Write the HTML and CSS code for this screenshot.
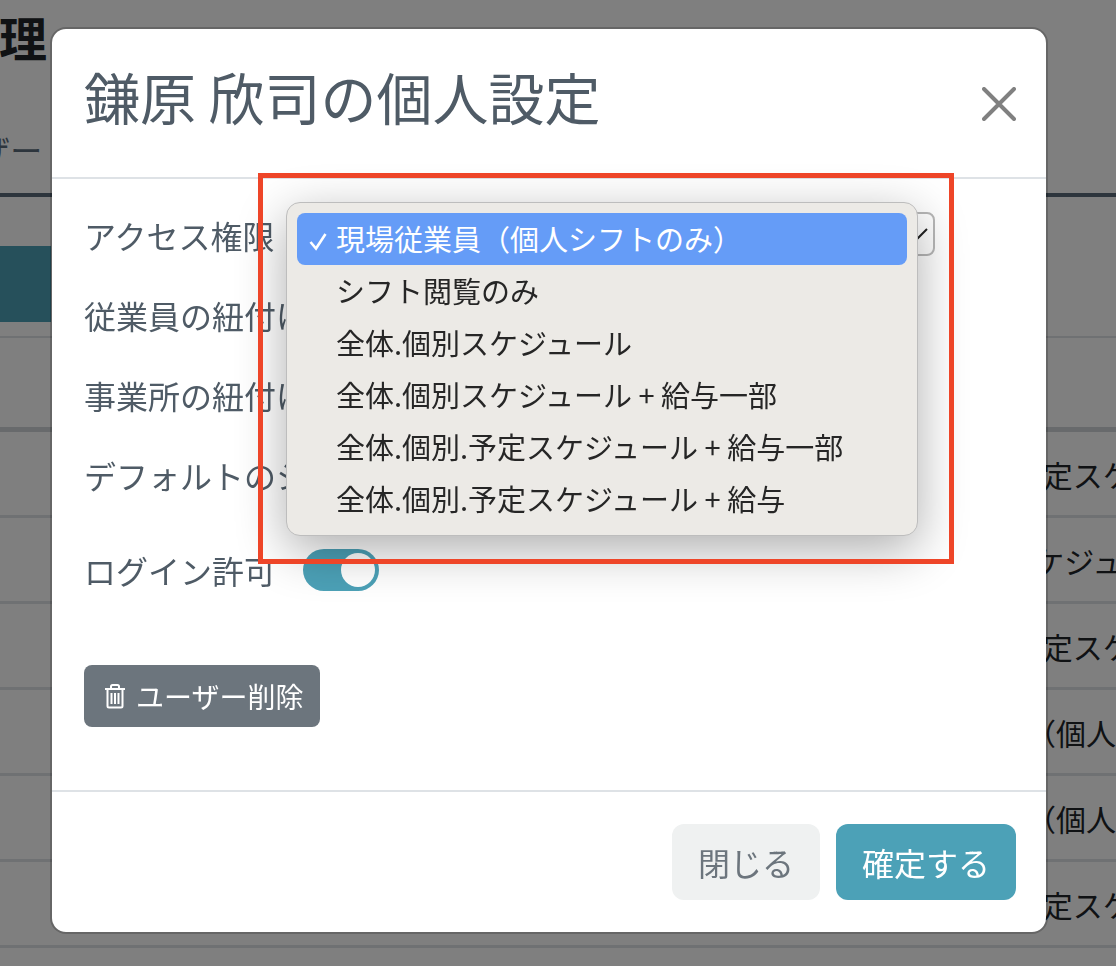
FILE: index.html
```html
<!DOCTYPE html>
<html lang="ja">
<head>
<meta charset="utf-8">
<title>ユーザー管理</title>
<link rel="stylesheet" href="styles.css">
</head>
<body>
<main class="page">
  <h1 class="page-title">ユーザー管理</h1>
  <div class="tabs"><span class="tab">ユーザー</span></div>
  <div class="actions"><span class="add-btn">ユーザーを追加</span></div>
  <div class="table">
    <div class="row row-head"></div>
    <div class="row row-th"></div>
    <div class="row"><span class="cell">全体.個別.予定スケジュール</span></div>
    <div class="row"><span class="cell">全体.個別スケジュール</span></div>
    <div class="row"><span class="cell">全体.個別.予定スケジュール</span></div>
    <div class="row"><span class="cell">現場従業員（個人シフトのみ）</span></div>
    <div class="row"><span class="cell">現場従業員（個人シフトのみ）</span></div>
    <div class="row"><span class="cell">全体.個別.予定スケジュール</span></div>
  </div>
</main>

<div class="backdrop">
  <section class="modal">
    <header class="modal-header">
      <h2 class="modal-title">鎌原 欣司の個人設定</h2>
      <svg class="close-icon" viewBox="0 0 34 34" width="34" height="34" aria-label="閉じる"><path d="M2 2L32 32M32 2L2 32" fill="none" stroke="#808080" stroke-width="4" stroke-linecap="round"/></svg>
    </header>
    <div class="modal-body">
      <div class="form-row">
        <label class="form-label">アクセス権限</label>
        <div class="select">
          <svg class="select-chevron" viewBox="0 0 24 14" width="24" height="14"><path d="M2 2L12 11L21 2" fill="none" stroke="#222" stroke-width="2"/></svg>
        </div>
      </div>
      <div class="form-row"><label class="form-label">従業員の紐付け</label></div>
      <div class="form-row"><label class="form-label">事業所の紐付け</label></div>
      <div class="form-row"><label class="form-label">デフォルトのシフト</label></div>
      <div class="form-row form-row-toggle">
        <label class="form-label">ログイン許可</label>
        <span class="toggle"><span class="toggle-knob"></span></span>
      </div>
      <button class="delete-btn" type="button">
        <svg class="trash-icon" viewBox="0 0 22 26" width="22" height="26"><path d="M1 6H21M7 6V3.5A1.5 1.5 0 0 1 8.500 2H13.500A1.500 1.500 0 0 1 15 3.500V6M3.500 6V23A1.500 1.500 0 0 0 5 24.500H17A1.500 1.500 0 0 0 18.500 23V6M7.500 10V21M11 10V21M14.500 10V21" fill="none" stroke="#fff" stroke-width="2"/></svg>
        ユーザー削除
      </button>
    </div>
    <footer class="modal-footer">
      <button class="btn btn-light" type="button">閉じる</button>
      <button class="btn btn-primary" type="button">確定する</button>
    </footer>

    <ul class="menu">
      <li class="menu-item is-selected"><svg class="check" viewBox="0 0 20 20" width="20" height="20"><path d="M2.500 11L8 17.500L17.500 3" fill="none" stroke="#fff" stroke-width="2.600"/></svg>現場従業員（個人シフトのみ）</li>
      <li class="menu-item">シフト閲覧のみ</li>
      <li class="menu-item">全体.個別スケジュール</li>
      <li class="menu-item">全体.個別スケジュール + 給与一部</li>
      <li class="menu-item">全体.個別.予定スケジュール + 給与一部</li>
      <li class="menu-item">全体.個別.予定スケジュール + 給与</li>
    </ul>
    <div class="highlight"></div>
  </section>
</div>
</body>
</html>
```

FILE: styles.css
```css
* { box-sizing: border-box; }
html, body { margin: 0; height: 966px; overflow: hidden; }
body {
  font-family: "Noto Sans CJK JP", "Noto Sans", sans-serif;
  background: #fff;
  color: #212529;
}
.page { height: 966px; overflow: hidden; }
.page-title {
  margin: 0 0 0 -240px;
  height: 80px;
  padding-top: 6px;
  font-size: 48px;
  line-height: 60px;
  font-weight: 700;
  white-space: nowrap;
}
.tabs { height: 117px; border-bottom: 4px solid #5a6b7a; display: flex; align-items: flex-end; }
.tab { margin-left: -85px; padding-bottom: 22px; font-size: 32px; line-height: 44px; color: #5a6b7a; white-space: nowrap; }
.actions { margin-top: 49px; height: 76px; }
.add-btn {
  display: block;
  width: 300px;
  margin-left: -249px;
  height: 76px;
  padding: 16px 20px;
  background: #4ca1b7;
  color: #fff;
  font-size: 32px;
  line-height: 44px;
  white-space: nowrap;
}
.table { margin-top: 14px; }
.row { height: 86px; border-bottom: 3px solid #dee2e6; display: flex; align-items: center; }
.row-head { height: 0; border-bottom: 2px solid #dee2e6; }
.row-th { height: 94px; border-bottom: 5px solid #d0d4d8; }
.cell { margin-left: 876px; font-size: 30px; line-height: 40px; white-space: nowrap; }

.backdrop {
  position: fixed;
  inset: 0;
  padding: 27px 68px 32px 50px;
  background: rgba(0, 0, 0, 0.5);
  display: flex;
}
.modal {
  position: relative;
  flex: 1;
  display: flex;
  flex-direction: column;
  background: #fff;
  border: 2px solid rgba(0, 0, 0, 0.2);
  background-clip: padding-box;
  border-radius: 16px;
}
.modal-header {
  height: 150px;
  flex: none;
  padding: 30px 30px 0 32px;
  display: flex;
  justify-content: space-between;
  border-bottom: 2px solid #dee2e6;
}
.modal-title {
  margin: 0;
  font-size: 56px;
  line-height: 74px;
  font-weight: 400;
  color: #4f5b66;
  white-space: nowrap;
}
.close-icon { margin-top: 28px; }
.modal-body {
  flex: 1;
  padding: 16px 32px 0;
  border-bottom: 2px solid #dee2e6;
}
.form-row { height: 80px; display: flex; align-items: center; }
.form-row-toggle { margin-top: 15px; }
.form-label { width: 215px; flex: none; font-size: 32px; line-height: 44px; color: #4f5b66; white-space: nowrap; }
.select {
  width: 636px;
  height: 44px;
  margin-top: -2px;
  border: 2px solid #b8b8b8;
  border-radius: 8px;
  display: flex;
  align-items: center;
  justify-content: flex-end;
  padding-right: 3px;
}
.select-chevron { flex: none; }
.toggle {
  width: 76px;
  height: 42px;
  flex: none;
  margin-left: 4px;
  border-radius: 21px;
  background: #4ca1b7;
  display: flex;
  align-items: center;
  justify-content: flex-end;
  padding-right: 4px;
}
.toggle-knob { width: 34px; height: 34px; border-radius: 50%; background: #fff; }
.delete-btn {
  margin-top: 55px;
  height: 62px;
  width: 236px;
  padding: 0 0 0 20px;
  display: flex;
  align-items: center;
  gap: 10px;
  border: 0;
  border-radius: 8px;
  background: #6c757d;
  color: #fff;
  font: inherit;
  font-size: 28px;
  white-space: nowrap;
}
.trash-icon { flex: none; }
.modal-footer {
  height: 140px;
  flex: none;
  padding: 32px 30px 0 0;
  display: flex;
  justify-content: flex-end;
  align-items: flex-start;
  gap: 16px;
}
.btn {
  height: 76px;
  border: 0;
  border-radius: 12px;
  font: inherit;
  font-size: 32px;
}
.btn-light { width: 148px; background: #eff1f1; color: #6c757d; }
.btn-primary { width: 180px; background: #4ca1b7; color: #fff; }

.menu {
  position: absolute;
  left: 234px;
  top: 173px;
  width: 632px;
  height: 334px;
  margin: 0;
  padding: 10px;
  list-style: none;
  background: #eceae6;
  border: 1px solid #bdbdbd;
  border-radius: 14px;
  box-shadow: 0 14px 50px rgba(0, 0, 0, 0.32);
}
.menu-item {
  height: 52px;
  padding-left: 39px;
  position: relative;
  font-size: 29px;
  line-height: 50px;
  color: #262626;
  white-space: nowrap;
}
.menu-item.is-selected { background: #659cf7; border-radius: 8px; color: #fff; }
.check { position: absolute; left: 11px; top: 18px; }
.highlight {
  position: absolute;
  left: 206px;
  top: 144px;
  width: 696px;
  height: 391px;
  border: 5px solid #ee4528;
  pointer-events: none;
}
```
